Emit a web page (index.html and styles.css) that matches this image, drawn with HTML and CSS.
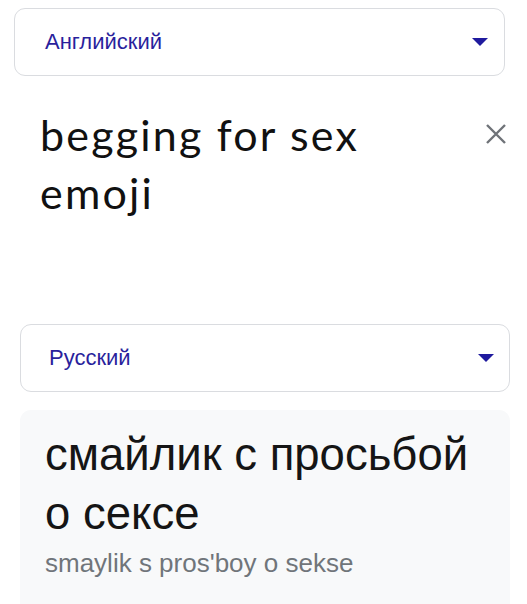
FILE: index.html
```html
<!DOCTYPE html>
<html lang="ru">
<head>
<meta charset="utf-8">
<link rel="stylesheet" href="styles.css">
</head>
<body>
<div class="page">
  <div class="lang-box lang-source">
    <span class="lang-name">Английский</span>
    <svg class="caret" width="16" height="8" viewBox="0 0 16 8"><path d="M0 0h16L8 8z" fill="#1f1a9e"/></svg>
  </div>
  <div class="source">
    <div class="source-text">begging for sex emoji</div>
    <svg class="clear" width="22" height="22" viewBox="0 0 22 22"><path d="M2 2L20 20M20 2L2 20" stroke="#6f7378" stroke-width="2.4" fill="none"/></svg>
  </div>
  <div class="lang-box lang-target">
    <span class="lang-name">Русский</span>
    <svg class="caret" width="16" height="8" viewBox="0 0 16 8"><path d="M0 0h16L8 8z" fill="#1f1a9e"/></svg>
  </div>
  <div class="result">
    <div class="result-text">смайлик с просьбой о сексе</div>
    <div class="translit">smaylik s pros'boy o sekse</div>
  </div>
</div>
</body>
</html>
```
FILE: styles.css
```css
html, body {
  margin: 0;
  padding: 0;
  background: #ffffff;
}
.page {
  width: 527px;
  height: 604px;
  overflow: hidden;
  display: flex;
  flex-direction: column;
  font-family: "Liberation Sans", Arial, sans-serif;
}
.lang-box {
  box-sizing: border-box;
  height: 68px;
  border: 1px solid #dadce0;
  border-radius: 11px;
  display: flex;
  align-items: center;
  justify-content: space-between;
  flex-shrink: 0;
}
.lang-source {
  margin: 8px 22px 0 14px;
  padding: 0 16px 0 30px;
}
.lang-target {
  margin: 0 17px 0 20px;
  padding: 0 15px 0 28px;
}
.lang-name {
  font-size: 22px;
  color: #2a1f9c;
  line-height: 20px;
}
.caret {
  display: block;
}
.source {
  display: flex;
  justify-content: space-between;
  align-items: flex-start;
  height: 218px;
  margin-top: 30px;
  padding: 0 20px 0 40px;
  flex-shrink: 0;
}
.source-text {
  font-family: Lato, "Open Sans", sans-serif;
  font-size: 43px;
  letter-spacing: 2.2px;
  line-height: 58px;
  color: #111111;
  max-width: 390px;
}
.clear {
  display: block;
  margin-top: 17px;
}
.result {
  margin: 18px 17px 0 20px;
  padding: 15px 20px 30px 25px;
  background: #f8f9fa;
  border-radius: 11px 11px 0 0;
  flex-grow: 1;
}
.result-text {
  font-size: 45.5px;
  line-height: 59px;
  color: #151515;
}
.translit {
  margin-top: 5px;
  font-size: 26px;
  line-height: 30px;
  color: #70757a;
}
```
